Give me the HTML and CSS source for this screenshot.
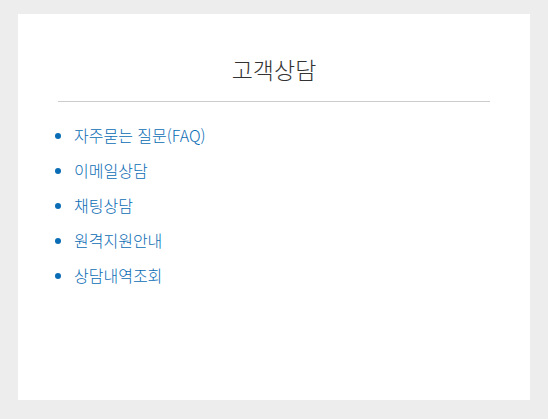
FILE: index.html
```html
<!DOCTYPE html>
<html lang="ko">
<head>
    <meta charset="UTF-8">
    <meta name="viewport" content="width=device-width, initial-scale=1.0">
    <title>고객상담</title>
    <link rel="stylesheet" href="styles.css">
</head>
<body>

    <div class="help_box">
        <h2 class="help_title">고객상담</h2>
        <ul class="help_list">
            <li><a href="#">자주묻는 질문(FAQ)</a></li>
            <li><a href="#">이메일상담</a></li>
            <li><a href="#">채팅상담</a></li>
            <li><a href="#">원격지원안내</a></li>
            <li><a href="#">상담내역조회</a></li>
        </ul>
    </div>

</body>
</html>
```

FILE: styles.css
```css
body {
    font-family: 'Noto Sans CJK KR', 'Noto Sans', sans-serif;
    background-color: #ededed;
    margin: 0;
    padding: 14px 18px 19px;
}

.help_box {
    background-color: #fff;
    height: 386px;
    padding: 39px 40px 0;
    box-sizing: border-box;
}

.help_title {
    margin: 0;
    padding-bottom: 16px;
    border-bottom: 1px solid #ccc;
    font-size: 23px;
    font-weight: 300;
    line-height: 32px;
    color: #333;
    text-align: center;
}

.help_list {
    margin: 16px 0 0;
    padding-left: 16px;
    color: #0a6cb4;
}

.help_list li {
    font-size: 16px;
    font-weight: 300;
    line-height: 35px;
}

.help_list a {
    color: #0a6cb4;
    text-decoration: none;
}
```
